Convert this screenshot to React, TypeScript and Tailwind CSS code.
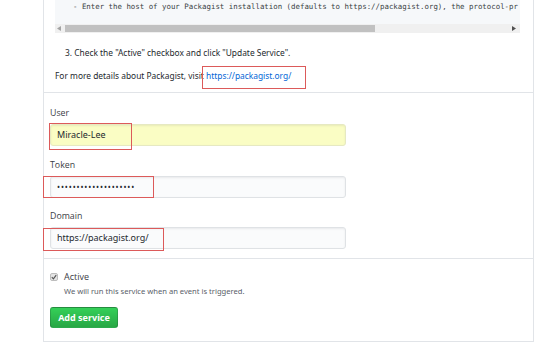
import React from "react";

const sans = { fontFamily: '"Noto Sans", "Open Sans", "Liberation Sans", sans-serif' };
const label = { fontFamily: '"Open Sans", "Noto Sans", sans-serif' };

export default function App() {
  return (
    <div className="relative w-[554px] h-[357px] bg-white overflow-hidden text-[#24292e]" style={sans}>
      <div className="ml-[43px] w-[491px] border-l border-r border-b border-[#e1e4e8]">
        {/* top section */}
        <div className="pl-[11px] pr-[13px] pb-[10px] border-b border-[#e1e4e8]">
          <div className="bg-[#f6f8fa] h-[33px] overflow-hidden">
            <div
              className="text-[7.4px] leading-[12px] pt-[1px] whitespace-nowrap pl-[18px] text-[#3a3f44]"
              style={{ fontFamily: '"DejaVu Sans Mono", "Liberation Mono", monospace' }}
            >
              - Enter the host of your Packagist installation (defaults to https://packagist.org), the protocol-pr
            </div>
            <div className="mt-[11px] h-[9px] bg-[#f0f0f0] flex items-center relative">
              <svg width="4" height="5" viewBox="0 0 4 5" className="ml-[2px]">
                <path d="M4 0 L0 2.5 L4 5 Z" fill="#a3a3a3" />
              </svg>
              <div className="ml-[4px] w-[310px] h-[7px] bg-[#c1c1c1]" />
              <div className="flex-1" />
              <svg width="4" height="5" viewBox="0 0 4 5" className="mr-[4px]">
                <path d="M0 0 L4 2.5 L0 5 Z" fill="#505050" />
              </svg>
            </div>
          </div>
          <div className="mt-[14px] ml-[10px] text-[8.4px] leading-[12px]">
            3. Check the "Active" checkbox and click "Update Service".
          </div>
          <div className="mt-[11px] text-[8.4px] leading-[12px]">
            For more details about Packagist, visit{" "}
            <span className="text-[#0366d6]">https://packagist.org/</span>
          </div>
        </div>

        {/* form section */}
        <div className="pl-[6px] pt-[14px] pb-[9px] border-b border-[#e1e4e8]">
          <div className="text-[8.8px] leading-[12px] font-medium text-[#3b4046]" style={label}>User</div>
          <div className="mt-[5px] w-[296px] h-[22px] bg-[#fafdc4] border border-[#e6e9c2] rounded-[3px] flex items-center pl-[6px] text-[9px] shadow-[inset_0_1px_2px_rgba(27,31,35,0.075)]">
            Miracle-Lee
          </div>
          <div className="mt-[13px] text-[8.8px] leading-[12px] font-medium text-[#3b4046]" style={label}>Token</div>
          <div className="mt-[5px] w-[296px] h-[22px] bg-[#fafbfc] border border-[#dfe2e5] rounded-[3px] flex items-center pl-[6px] text-[8px] tracking-[0.9px] shadow-[inset_0_1px_2px_rgba(27,31,35,0.075)]">
            ••••••••••••••••••••
          </div>
          <div className="mt-[12px] text-[8.8px] leading-[12px] font-medium text-[#3b4046]" style={label}>Domain</div>
          <div className="mt-[5px] w-[296px] h-[22px] bg-[#fafbfc] border border-[#dfe2e5] rounded-[3px] flex items-center pl-[6px] text-[9px] shadow-[inset_0_1px_2px_rgba(27,31,35,0.075)]">
            https://packagist.org/
          </div>
        </div>

        {/* active section */}
        <div className="pl-[6px] pt-[12px] pb-[13px]">
          <div className="flex items-center h-[12px]">
            <div className="w-[8px] h-[8px] rounded-[2px] bg-[#e4e4e4] border border-[#bdbdbd] flex items-center justify-center">
              <svg width="6" height="6" viewBox="0 0 6 6">
                <path d="M0.8 3.2 L2.4 4.8 L5.2 1.2" stroke="#555" strokeWidth="1.2" fill="none" />
              </svg>
            </div>
            <span className="ml-[6px] text-[9px] font-medium text-[#3b4046]" style={label}>Active</span>
          </div>
          <div className="ml-[14px] mt-[2px] text-[7.6px] leading-[12px] text-[#586069]">
            We will run this service when an event is triggered.
          </div>
          <div className="mt-[10px] w-[68px] h-[21px] rounded-[3px] border border-[rgba(27,31,35,0.2)] bg-gradient-to-b from-[#34d058] to-[#28a745] text-white text-[9px] font-bold flex items-center justify-center">
            Add service
          </div>
        </div>
      </div>

      {/* red annotation boxes */}
      <div className="absolute left-[202px] top-[66px] w-[104px] h-[23px] border border-[#dc5a5a]" />
      <div className="absolute left-[49px] top-[123px] w-[83px] h-[27px] border border-[#dc5a5a]" />
      <div className="absolute left-[43px] top-[176px] w-[111px] h-[22px] border border-[#dc5a5a]" />
      <div className="absolute left-[43px] top-[228px] w-[121px] h-[23px] border border-[#dc5a5a]" />
    </div>
  );
}
